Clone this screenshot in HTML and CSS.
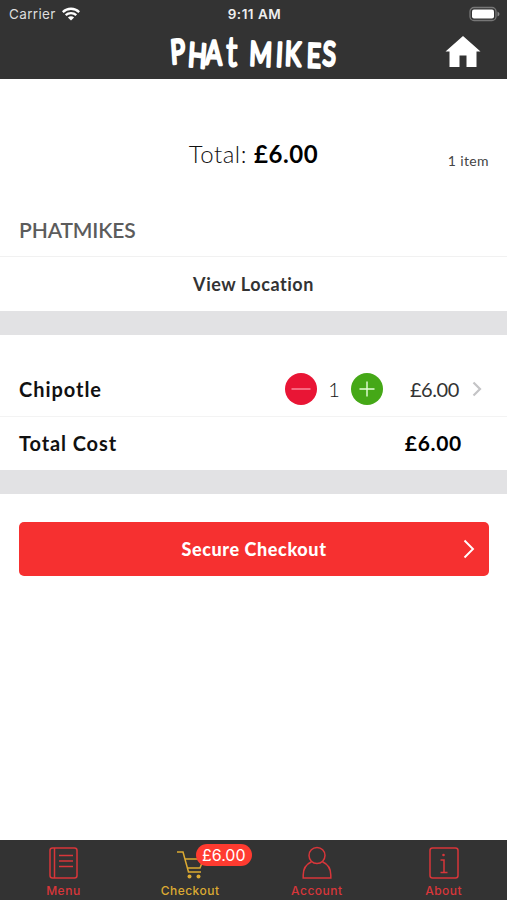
FILE: index.html
```html
<!DOCTYPE html>
<html lang="en">
<head>
<meta charset="utf-8">
<title>Checkout</title>
<link rel="stylesheet" href="styles.css">
</head>
<body>
<header class="header">
  <div class="status">
    <div class="carrier"><span>Carrier</span>
      <svg width="18" height="14" viewBox="0 0 18 14" fill="none" stroke="#fff" stroke-width="2.3"><path d="M.8 5.1C5.400.6 12.600.6 17.200 5.100"/><path d="M3.700 8.200c3-2.900 7.600-2.900 10.600 0"/><path d="M9 13.600 5.900 10.500c1.700-1.600 4.500-1.600 6.200 0z" fill="#fff" stroke="none"/></svg>
    </div>
    <div class="clock">9:11 AM</div>
    <svg class="battery" width="32" height="16" viewBox="0 0 32 16"><rect x="2" y="1.500" width="26" height="13" rx="4" fill="#333" stroke="#777" stroke-width="1.300"/><rect x="4" y="3.500" width="22" height="9" rx="2" fill="#fff"/><path d="M29.500 5.500v5q2-1 2-2.500t-2-2.500z" fill="#888"/></svg>
  </div>
  <div class="brand">
    <svg class="logo" width="176" height="44" viewBox="0 0 176 44"><g transform="scale(.74 1)"><text class="logo-text" y="32 34 32 34 34 33 34 33 35 33" x="7 29 53 81 100 112 148 160 190 211" rotate="-5 5 2 1 0 3 4 3 2 3">PHA<tspan class="tall">t</tspan> MIKES</text></g></svg>
    <svg class="home" width="36" height="32" viewBox="0 0 36 32"><path d="M18 0 35.500 15.500H31.500V31H21.500V19.500H14.500V31H4.500V15.500H.5z" fill="#fff"/></svg>
  </div>
</header>
<main class="content">
  <section class="summary"><p class="total">Total: <b>£6.00</b></p><span class="count">1 item</span></section>
  <h1 class="shop">PHATMIKES</h1>
  <a class="location">View Location</a>
  <div class="band"></div>
  <section class="item">
    <span class="name">Chipotle</span>
    <svg width="32" height="32" viewBox="0 0 32 32"><circle cx="16" cy="16" r="16" fill="#e91535"/><path d="M6.500 16h19" stroke="#ff9aaa" stroke-width="1.300"/></svg>
    <span class="quantity">1</span>
    <svg width="32" height="32" viewBox="0 0 32 32"><circle cx="16" cy="16" r="16" fill="#45a817"/><path d="M8.500 16h15M16 8.500v15" stroke="#e5ffd9" stroke-width="1.400"/></svg>
    <span class="price">£6.00</span>
    <svg class="more" width="10" height="16" viewBox="0 0 10 16"><path d="m1.500 1.500 6.500 6.500-6.500 6.500" fill="none" stroke="#c4c4c6" stroke-width="2.200"/></svg>
  </section>
  <section class="cost"><span class="name cost-name">Total Cost</span><b class="cost-value">£6.00</b></section>
  <div class="band"></div>
  <button class="checkout"><span>Secure Checkout</span><svg class="go" width="12" height="20" viewBox="0 0 12 20"><path d="m1.500 1.500 8.500 8.500-8.500 8.500" fill="none" stroke="#fff" stroke-width="1.900"/></svg></button>
</main>
<nav class="tabs">
  <a class="tab"><svg width="32" height="34" viewBox="0 0 32 34"><rect x="3" y="2" width="27" height="30" rx="2.500"/><path d="M7.500 2v30M12 9.500h14M12 15h14M12 20.500h14"/></svg><span>Menu</span></a>
  <a class="tab active"><svg width="32" height="34" viewBox="0 0 32 34"><path d="M3 6h6l5.500 20H27M10.500 13h19l-3.500 9H13.500"/><g fill="#dcaa32" stroke="none"><circle cx="15.500" cy="30.500" r="2"/><circle cx="24.500" cy="30.500" r="2"/></g></svg><span>Checkout</span><span class="badge">£6.00</span></a>
  <a class="tab"><svg width="32" height="34" viewBox="0 0 32 34"><circle cx="16" cy="9.500" r="8"/><path d="M10.500 15.700C5.500 18 2.200 23 2.200 29v3h27.600v-3c0-6-3.300-11-8.300-13.300"/></svg><span>Account</span></a>
  <a class="tab"><svg width="32" height="34" viewBox="0 0 32 34"><rect x="2" y="2" width="28" height="30" rx="2.500"/><path d="M12.500 14H16v12M12.500 26.500h7"/><circle cx="15.500" cy="9" r="1.300" fill="#d8363a" stroke="none"/></svg><span>About</span></a>
</nav>
</body>
</html>
```

FILE: styles.css
```css
* { box-sizing: border-box; }
body { margin: 0; height: 900px; display: flex; flex-direction: column; overflow: hidden; background: #fff; font-family: Lato, sans-serif; color: #111; }
svg { display: block; flex: none; }
.header { height: 79px; background: #333; color: #fff; }
.status { height: 28px; display: grid; grid-template-columns: 1fr auto 1fr; align-items: center; padding: 0 7px 0 9px; font: 13.5px/28px Inter, sans-serif; }
.carrier { display: flex; align-items: center; gap: 6px; letter-spacing: .35px; color: #ddd; }
.clock { font-weight: 600; font-size: 13.5px; letter-spacing: .5px; color: #eee; }
.battery { justify-self: end; margin-top: -1px; }
.brand { height: 51px; display: grid; grid-template-columns: 1fr 176px 1fr; align-items: start; padding: 4px 26px 0 27px; }
.logo { grid-column: 2; overflow: visible; }
.logo-text { font: 400 33px Lato, sans-serif; fill: #fff; stroke: #fff; stroke-width: 3px; stroke-linejoin: round; }
.tall { font-size: 42px; stroke-width: 2px; }
.home { justify-self: end; margin-top: 4px; }
.content { flex: 1; }
.summary { height: 122px; display: grid; grid-template-columns: 1fr auto 1fr; padding: 59px 18px 0; align-items: start; }
.total { grid-column: 2; margin: 0; font-size: 24px; line-height: 32px; font-weight: 300; letter-spacing: .55px; }
.total b { font-weight: 700; color: #000; }
.count { justify-self: end; font-size: 14px; line-height: 32px; margin-top: 7px; letter-spacing: .4px; color: #444; }
.shop { margin: 0; height: 56px; padding: 14px 19px; border-bottom: 1px solid #f1f1f1; font-size: 21px; line-height: 29px; font-weight: 600; letter-spacing: -.15px; color: #5c5c5c; }
.location { display: flex; height: 54px; align-items: center; justify-content: center; font-size: 18px; font-weight: 700; letter-spacing: .55px; color: #333; }
.band { height: 24px; background: #e2e2e4; }
.band + .item { margin-top: 1px; }
.item { height: 81px; display: flex; align-items: center; padding: 26px 25px 0 19px; border-bottom: 1px solid #f3f3f3; }
.name { flex: 1; font-size: 20px; font-weight: 700; letter-spacing: .95px; }
.cost-name { letter-spacing: .9px; }
.quantity { width: 34px; text-align: center; font-size: 20px; font-weight: 300; }
.price { width: 76px; text-align: right; font-size: 20px; font-weight: 400; letter-spacing: -.4px; color: #333; }
.more { margin-left: 13px; }
.cost { height: 53px; display: flex; align-items: center; padding: 0 45px 2px 19px; }
.cost-value { font-size: 21px; letter-spacing: .7px; color: #000; }
.checkout { display: grid; grid-template-columns: 1fr auto 1fr; align-items: center; width: 470px; height: 54px; margin: 27.5px 0 0 19px; padding: 0 14px; border: 0; border-radius: 5px; background: #f63030; color: #fff; font: 900 18px Lato, sans-serif; letter-spacing: .6px; }
.checkout span { grid-column: 2; }
.go { justify-self: end; }
.tabs { height: 60px; background: #333; display: grid; grid-template-columns: repeat(4, 1fr); }
.tab { position: relative; display: flex; flex-direction: column; align-items: center; padding-top: 6px; color: #d8363a; font: 500 12px/16px Inter, sans-serif; letter-spacing: .5px; }
.tab span { margin-top: 3px; }
.tab svg { fill: none; stroke: currentColor; stroke-width: 1.500; }
.tab.active { color: #dcaa32; }
.tab .badge { position: absolute; left: 69px; top: 4px; width: 56px; height: 22px; margin: 0; border-radius: 11px; background: #ff3b30; color: #fff; text-align: center; font: 400 16px/22px Inter, sans-serif; letter-spacing: 0; }
```
